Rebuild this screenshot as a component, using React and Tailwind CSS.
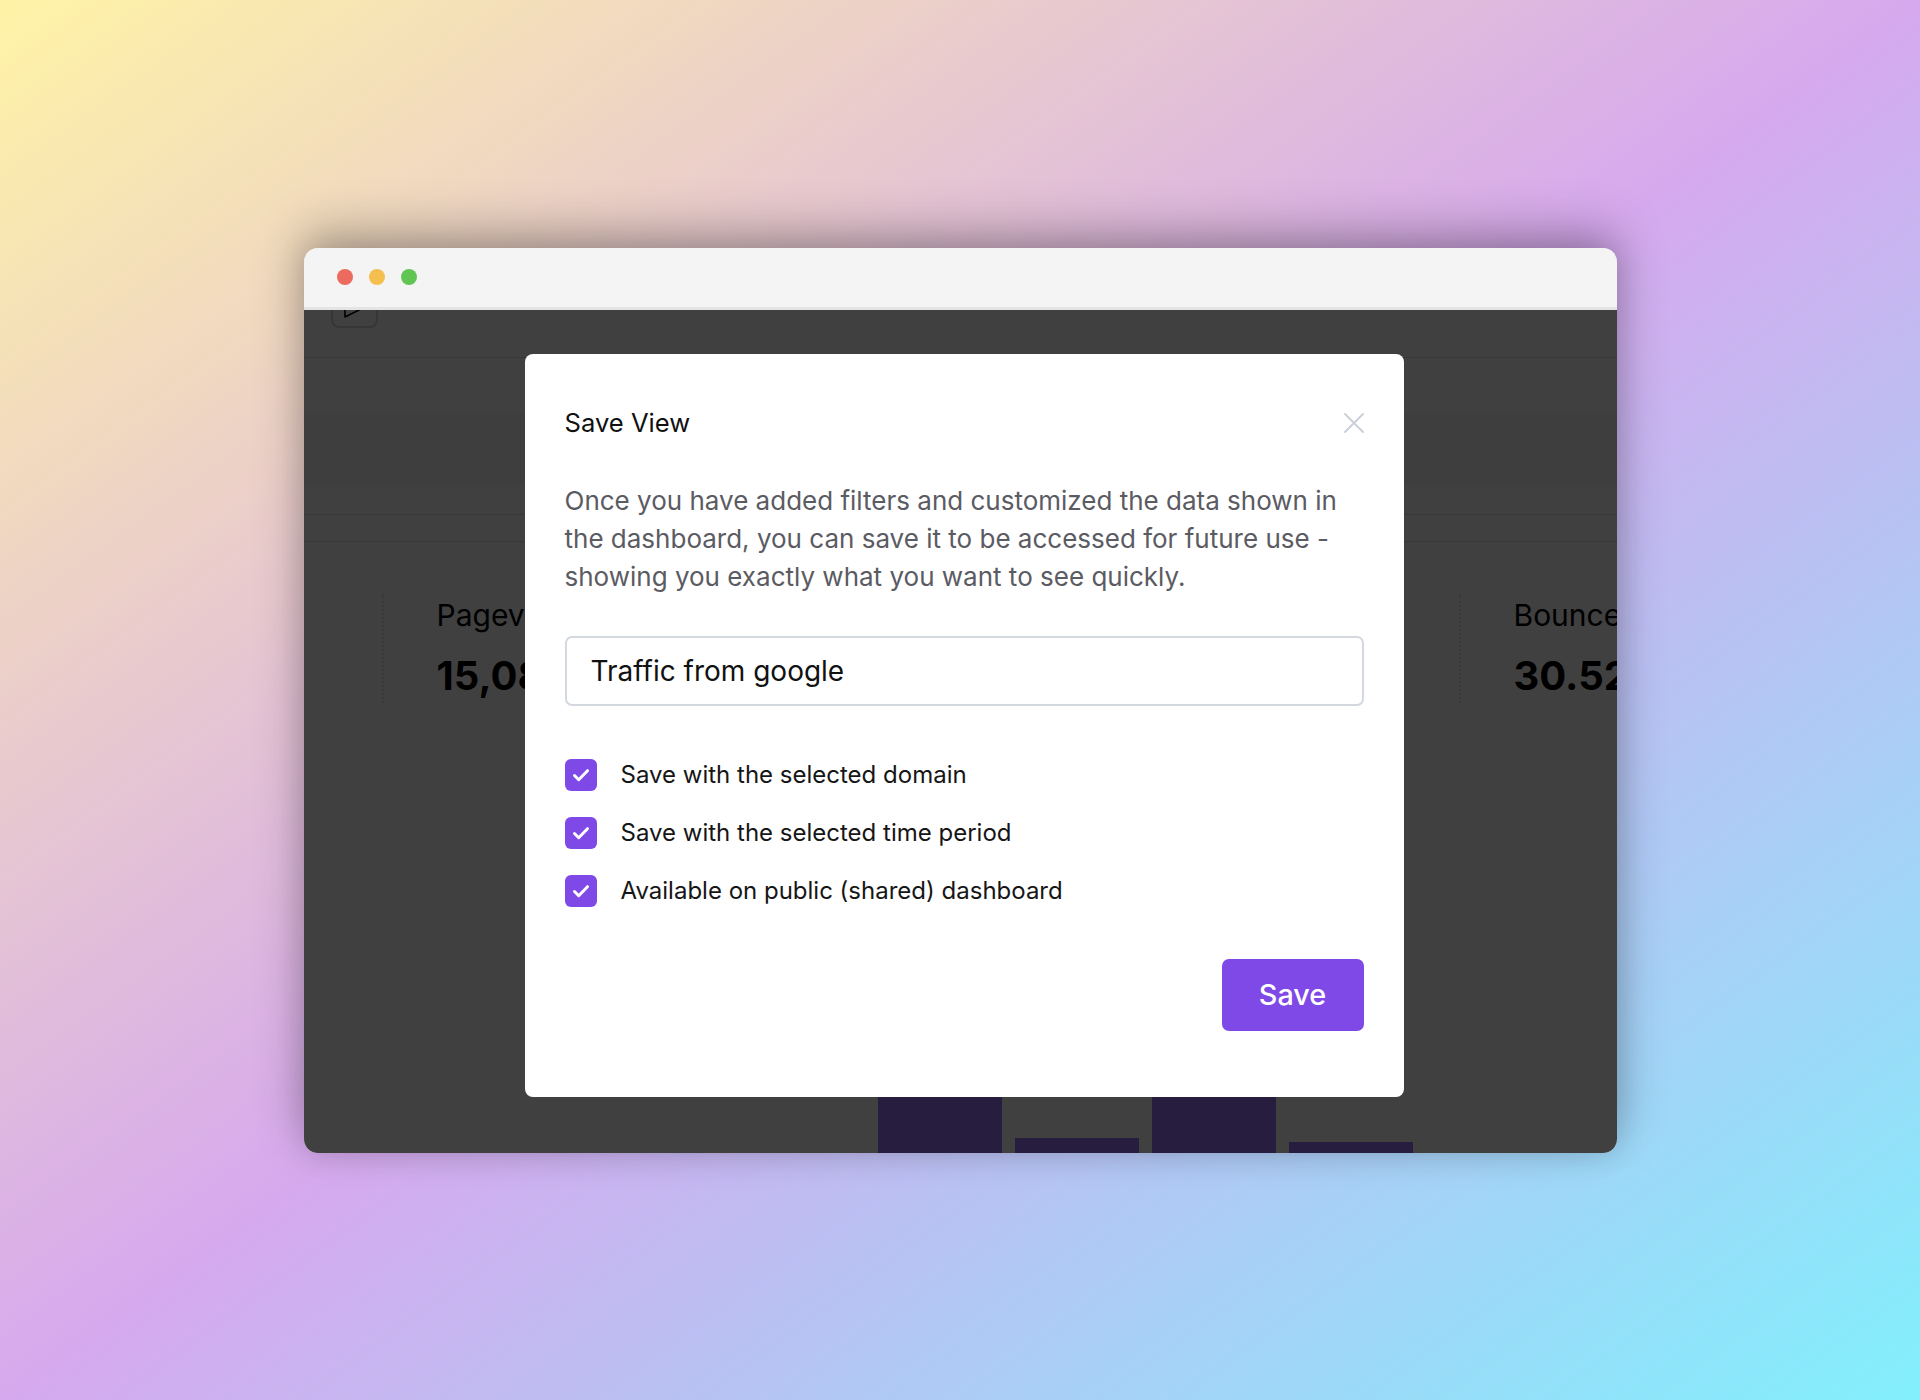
import React from "react";

function Check() {
  return (
    <svg width="32" height="32" viewBox="0 0 32 32" fill="none">
      <path d="M9.5 16.5l4.2 4.2 8.8-9" stroke="white" strokeWidth="3" strokeLinecap="round" strokeLinejoin="round" />
    </svg>
  );
}

function CheckRow({ label }) {
  return (
    <div className="flex items-center gap-[24px]">
      <div className="w-[32px] h-[32px] rounded-[6px] bg-[#7f49e7] flex items-center justify-center shrink-0">
        <Check />
      </div>
      <span className="text-[24px] leading-[32px] text-[#161616]">{label}</span>
    </div>
  );
}

function Stat({ label, value }) {
  return (
    <div className="w-[359px] shrink-0 border-l-2 border-dotted border-[#e2e2e2] pl-[53px] pt-[3px] pb-[3px]">
      <div className="text-[30px] leading-[36px] text-black whitespace-nowrap">{label}</div>
      <div className="mt-[19px] text-[40px] leading-[48px] font-bold text-black whitespace-nowrap">{value}</div>
    </div>
  );
}

export default function App() {
  return (
    <div className="min-h-[1400px] w-full flex items-center justify-center bg-[linear-gradient(to_bottom_right,#fff3a6,#d6a9ee,#82effd)] font-['Inter',sans-serif]">
      <div className="w-[1313px] h-[905px] rounded-[14px] overflow-hidden flex flex-col shadow-[0_-16px_50px_rgba(0,0,0,0.28),0_0_30px_rgba(0,0,0,0.12)]">
        {/* title bar */}
        <div className="h-[62px] shrink-0 bg-[#f4f4f4] border-b-[3px] border-[#e4e4e4] flex items-center gap-[16px] pl-[33px]">
          <span className="w-[16px] h-[16px] rounded-full bg-[#ec6a5e]" />
          <span className="w-[16px] h-[16px] rounded-full bg-[#f4bf4f]" />
          <span className="w-[16px] h-[16px] rounded-full bg-[#61c554]" />
        </div>

        {/* content */}
        <div className="relative flex-1 overflow-hidden bg-white">
          <div className="flex flex-col h-full">
            <div className="h-[48px] shrink-0 border-b border-[#e0e0e0]">
              <div className="ml-[27px] -mt-[28px] w-[47px] h-[46px] rounded-[8px] border-2 border-[#d8d8d8]">
                <svg width="47" height="46" viewBox="0 0 47 46" fill="none" className="-ml-[2px] -mt-[2px]">
                  <path d="M14 11v24l24-12z" stroke="black" strokeWidth="1.6" strokeLinejoin="round" />
                </svg>
              </div>
            </div>
            <div className="h-[55px] shrink-0" />
            <div className="h-[72px] shrink-0 bg-[#f7f7f7]" />
            <div className="h-[29px] shrink-0" />
            <div className="h-[28px] shrink-0 border-y border-[#e0e0e0]" />
            <div className="mt-[52px] flex pl-[78px] shrink-0">
              <Stat label="Pageviews" value="15,087" />
              <Stat label="Visitors" value="4,512" />
              <Stat label="Visit duration" value="1m 24s" />
              <Stat label="Bounce rate" value="30.52%" />
            </div>
            <div className="flex-1 flex items-end gap-[13px] pl-[574px]">
              <div className="w-[124px] h-[260px] bg-[#9c74fc]" />
              <div className="w-[124px] h-[15px] bg-[#9c74fc]" />
              <div className="w-[124px] h-[260px] bg-[#9c74fc]" />
              <div className="w-[124px] h-[11px] bg-[#9c74fc]" />
            </div>
          </div>

          {/* overlay */}
          <div className="absolute inset-0 bg-black/75" />

          {/* modal */}
          <div className="absolute left-[221px] top-[44px] w-[879px] h-[743px] bg-white rounded-[8px] px-[40px] pt-[53px]">
            <div className="flex items-center justify-between h-[32px]">
              <h2 className="text-[25.6px] leading-[32px] text-[#111111]">Save View</h2>
              <svg width="20" height="20" viewBox="0 0 20 20" fill="none">
                <path d="M1 1l18 18M19 1L1 19" stroke="#c9ced8" strokeWidth="1.8" strokeLinecap="round" />
              </svg>
            </div>
            <p className="mt-[43px] text-[26px] leading-[38px] text-[#5b5b63] whitespace-nowrap">
              Once you have added filters and customized the data shown in
              <br />
              the dashboard, you can save it to be accessed for future use -
              <br />
              showing you exactly what you want to see quickly.
            </p>
            <input
              readOnly
              value="Traffic from google"
              className="mt-[40px] block w-full h-[70px] border-2 border-[#d3d8df] rounded-[7px] pl-[24px] text-[28px] text-[#111111] outline-none"
            />
            <div className="mt-[53px] flex flex-col gap-[26px]">
              <CheckRow label="Save with the selected domain" />
              <CheckRow label="Save with the selected time period" />
              <CheckRow label="Available on public (shared) dashboard" />
            </div>
            <div className="mt-[52px] flex justify-end">
              <button className="w-[142px] h-[72px] rounded-[7px] bg-[#7f49e7] text-white text-[28.8px] font-medium">
                Save
              </button>
            </div>
          </div>
        </div>
      </div>
    </div>
  );
}
